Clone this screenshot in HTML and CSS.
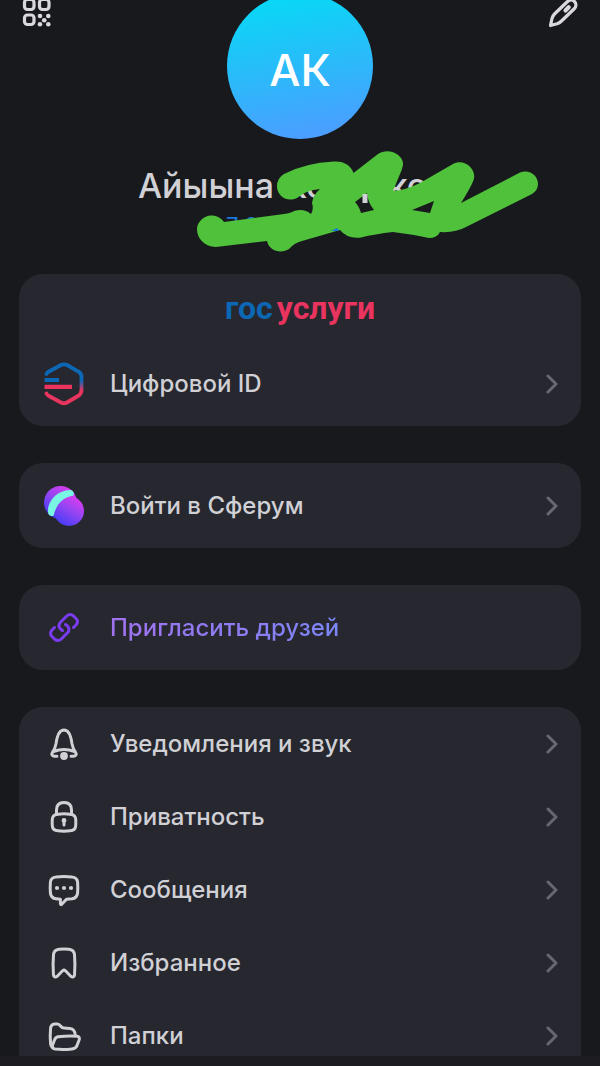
FILE: index.html
```html
<!DOCTYPE html>
<html lang="ru">
<head>
<meta charset="utf-8">
<meta name="viewport" content="width=device-width, initial-scale=1">
<title>Профиль</title>
<link rel="stylesheet" href="styles.css">
</head>
<body>
<svg class="defs" aria-hidden="true">
  <symbol id="chevron" viewBox="0 0 12 20"><path d="M2 2l8 8-8 8" fill="none" stroke="currentColor" stroke-width="3" stroke-linecap="round" stroke-linejoin="round"/></symbol>
</svg>
<main class="screen">
  <header class="top">
    <button class="tool" aria-label="QR-код">
      <svg width="30" height="30" viewBox="0 0 30 30" fill="none" stroke="currentColor" stroke-width="3.200">
        <rect x="3.500" y="1.500" width="9.500" height="10" rx="3"/><rect x="18.500" y="1.500" width="9.500" height="10" rx="3"/><rect x="3.500" y="17" width="9.500" height="9.500" rx="3"/>
        <g fill="currentColor" stroke="none"><circle cx="19" cy="18" r="2.300"/><circle cx="27.300" cy="18" r="2.300"/><circle cx="23.200" cy="22.200" r="2.300"/><circle cx="19" cy="26.300" r="2.300"/><circle cx="27.300" cy="26.300" r="2.300"/></g>
      </svg>
    </button>
    <div class="avatar">АК</div>
    <button class="tool" aria-label="Редактировать">
      <svg width="30" height="30" viewBox="0 0 30 30" fill="none" stroke="currentColor" stroke-width="3.200" stroke-linecap="round" stroke-linejoin="round">
        <path d="M1.500 27.500l1.500-7C3.500 18.500 4 17.500 5.500 16L18 4c2.500-2.500 5.500-2.500 7.500-.5s2 5-.5 7.500L12.500 23C11 24.500 10 25.200 8 25.800z"/><path d="M16.500 12.500l3.200-3.200" stroke-width="4.200"/>
      </svg>
    </button>
  </header>

  <section class="identity">
    <h1 class="name"><span>Айыына</span> <span>Ко</span><span class="tail">ко</span></h1>
    <p class="phone">7 99</p>
    <svg class="scribble" width="342" height="102" viewBox="197 151 342 102" aria-hidden="true">
      <path fill="#50c13a" fill-rule="evenodd" d="M211 215.500C217 215.500 221 218 224 222L284 214Q291 213 294 211Q304 208 311 214Q314 209 312 203Q313 195 320 189Q306 190 297 198C286 203 277 195 277 186.500Q277 178 284 174Q305 163 334 161.500C345 161 351 166 353.500 173L378 154C389 147 404 155 403 165Q402 170 400 174L393 191Q406 190 420 183L453 164C464 158 476 169 474 178Q474 182 461 203L520 172.500C530 169 538 176 538 184Q538 190 532 194L466 227Q455 233 440 232Q437 238 429 238Q410 234 393 232Q375 234 361 237.500Q347 239 340 230L302 241Q294 243 289 249C281 254 269 251 267 241L220 246.500C207 249 197 240 197 229C197 222 204 215.500 211 215.500ZM355 202Q359 206 361 213L374 210Q368 203 367 193ZM412 210L434 201L430 213Z"/>
      <path d="M365 194v9" stroke="#d0d0d5" stroke-width="5"/><path d="M331 231l6-3 2 3z" fill="#1877dc"/>
    </svg>
  </section>

  <section class="card">
    <div class="brand"><span class="brand-blue">гос</span><span class="brand-red">услуги</span></div>
    <a class="row" href="#id">
      <svg class="icon" width="44" height="44" viewBox="0 0 44 44" fill="none" stroke-width="3.800" stroke-linecap="round">
        <defs><linearGradient id="hex" x1="0" y1="0" x2="0" y2="44" gradientUnits="userSpaceOnUse"><stop offset=".42" stop-color="#0c67b5"/><stop offset=".65" stop-color="#e8345e"/></linearGradient></defs>
        <path stroke="url(#hex)" d="M4.500 12Q5 10.500 7 9.500L19 3Q22 1.600 25 3L36 9.300Q39.500 11 39.500 15V28Q39.500 32 36 34L25 40.500Q22 42 19 40.500L7 34Q5 33 4.500 31.500"/>
        <path d="M2.500 18H17" stroke="#0c67b5" stroke-linecap="butt"/><path d="M2.500 24.800H30" stroke="#e8345e" stroke-width="4.200" stroke-linecap="butt"/>
      </svg>
      <span class="label">Цифровой ID</span><svg class="chevron"><use href="#chevron"/></svg>
    </a>
  </section>

  <section class="card single">
    <a class="row" href="#sferum">
      <svg class="icon" width="44" height="44" viewBox="0 0 44 44">
        <defs><linearGradient id="sf" x1=".85" y1=".05" x2=".3" y2=".95"><stop stop-color="#e03cf0"/><stop offset=".5" stop-color="#9345f3"/><stop offset="1" stop-color="#4a3df5"/></linearGradient></defs>
        <circle cx="18.500" cy="18.500" r="16.500" fill="url(#sf)"/>
        <circle cx="27" cy="27" r="15" fill="url(#sf)"/>
        <path d="M6 28C5.500 17 15 6.500 28 6C31 6 32.500 8.500 31.500 11.500C21 13 14 20.500 11.700 31.500C9 33 6.200 31.500 6 28Z" fill="#79f5e4"/>
      </svg>
      <span class="label">Войти в Сферум</span><svg class="chevron"><use href="#chevron"/></svg>
    </a>
  </section>

  <section class="card single">
    <a class="row" href="#invite">
      <svg class="icon" width="44" height="44" viewBox="0 0 44 44" fill="none" stroke="#7a3cf0" stroke-width="3" stroke-linecap="round" stroke-linejoin="round">
        <path d="M31.500 21.500L34 19Q37 15.500 34 12.500L31.500 10Q28 7 24.700 10L18.500 16.200Q15.500 19.500 18.500 23L20.500 24.500"/>
        <path d="M31.500 21.500L34 19Q37 15.500 34 12.500L31.500 10Q28 7 24.700 10L18.500 16.200Q15.500 19.500 18.500 23L20.500 24.500" transform="rotate(180 22 21.500)"/>
      </svg>
      <span class="label invite">Пригласить друзей</span>
    </a>
  </section>

  <nav class="card menu">
    <a class="row" href="#notifications">
      <svg class="icon line" width="44" height="44" viewBox="0 0 44 44"><path d="M15 34.300h-2.500q-4-1-2-4 2.500-3 3.500-8.500c1-7.500 3-13.800 8-13.800s7 6.300 8 13.800q1 5.500 3.500 8.500 2 3-2 4H29M11.500 29.500Q22 25.500 32.500 29.500"/><circle cx="22" cy="34" r="3.900" fill="currentColor" stroke="none"/></svg>
      <span class="label">Уведомления и звук</span><svg class="chevron"><use href="#chevron"/></svg>
    </a>
    <a class="row" href="#privacy">
      <svg class="icon line" width="44" height="44" viewBox="0 0 44 44"><path d="M14.500 19.500V15q0-7.500 7.500-7.500t7.500 7.500v4.500"/><path d="M16 19.200Q22 18.500 28 19.200C32.500 19.500 33.500 21.500 33.700 24Q34 28 33.600 31.500C33.200 35 31 35.500 28 35.800Q22 36.500 16 35.800C13 35.500 10.800 35 10.400 31.500Q10 28 10.300 24C10.500 21.500 11.500 19.500 16 19.200Z"/><circle cx="22" cy="25.500" r="2.400" fill="currentColor" stroke="none"/><path d="M22 26.500v3.500"/></svg>
      <span class="label">Приватность</span><svg class="chevron"><use href="#chevron"/></svg>
    </a>
    <a class="row" href="#messages">
      <svg class="icon line" width="44" height="44" viewBox="0 0 44 44"><path d="M14 9Q22 8 30 9C34 9.400 35.200 11 35.600 14Q36 20 35.600 25C35.200 28.500 34 30.300 30 30.800L24.500 31.200 19.500 36.500Q18.500 37 18.400 35.500V31.300L14 30.800C10 30.300 8.800 28.500 8.400 25Q8 20 8.400 14C8.800 11 10 9.400 14 9Z"/><g fill="currentColor" stroke="none"><circle cx="15" cy="20" r="2.100"/><circle cx="22" cy="20" r="2.100"/><circle cx="29" cy="20" r="2.100"/></g></svg>
      <span class="label">Сообщения</span><svg class="chevron"><use href="#chevron"/></svg>
    </a>
    <a class="row" href="#favorites">
      <svg class="icon line" width="44" height="44" viewBox="0 0 44 44"><path d="M17 8.200Q22 7.600 27 8.200Q32 8.800 32.500 13.500Q33.300 23 32.600 33C32.500 36.500 30 37 28 34.500L23.500 29.800Q22 28.500 20.500 29.800L16 34.500C14 37 11.500 36.500 11.400 33Q10.700 23 11.500 13.500Q12 8.800 17 8.200Z"/></svg>
      <span class="label">Избранное</span><svg class="chevron"><use href="#chevron"/></svg>
    </a>
    <a class="row" href="#folders">
      <svg class="icon line" width="44" height="44" viewBox="0 0 44 44"><path d="M11 34Q9 33 8.600 30Q7.800 22 8.600 14Q9 10.500 12.500 10H15.500Q17 10 18.500 12Q20 14 22 14L28 14.500Q33 15 33.300 21.500"/><path d="M16 22.800Q26 21.500 35 22.200Q38 22.700 37.300 25.500L35 31.500Q34 34.500 30 34.900Q21 36 13 35Q9.500 34.400 10.600 31L12.500 26Q13.300 23.300 16 22.800Z"/></svg>
      <span class="label">Папки</span><svg class="chevron"><use href="#chevron"/></svg>
    </a>
  </nav>
</main>
<footer class="bottom-bar"></footer>
</body>
</html>
```

FILE: styles.css
```css
* { box-sizing: border-box; }

body {
  margin: 0;
  height: 100vh;
  display: flex;
  flex-direction: column;
  background: #18191d;
  color: #d0d0d5;
  font-family: Inter, "Noto Sans", sans-serif;
}

.defs { position: absolute; width: 0; height: 0; }

.screen {
  flex: 1;
  min-height: 0;
  overflow: hidden;
  padding: 0 19px;
}

.top {
  display: flex;
  justify-content: space-between;
  align-items: flex-start;
  margin: 0 2px;
}

.tool {
  padding: 0;
  border: 0;
  background: none;
  color: #d9d9dd;
  margin-top: -2px;
}

.tool svg { display: block; }

.avatar {
  width: 146px;
  height: 146px;
  margin-top: -7px;
  border-radius: 50%;
  background: linear-gradient(170deg, #06daf5 5%, #4d9cff 95%);
  color: #fff;
  font-size: 44px;
  font-weight: 500;
  display: flex;
  align-items: center;
  justify-content: center;
  padding-top: 8px;
}

.identity {
  position: relative;
  height: 135px;
  padding: 26px 0 0 119px;
}

.name {
  margin: 0;
  display: flex;
  gap: 10px;
  font-size: 34px;
  line-height: 42px;
  font-weight: 500;
}

.tail { margin-left: 52px; }

.phone {
  margin: 4px 0 0 88px;
  font-size: 22px;
  line-height: 28px;
  color: #1877dc;
}

/* Marker strokes lie over the name and the phone number. */
.scribble { position: absolute; left: 178px; top: 12px; }

.card {
  margin-bottom: 37px;
  border-radius: 24px;
  background: #26272f;
  overflow: hidden;
  padding-bottom: 6px;
}

.single { padding-top: 6px; }

.brand {
  height: 73px;
  display: flex;
  align-items: center;
  justify-content: center;
  gap: 4px;
  font-family: Roboto, "Noto Sans", sans-serif;
  font-size: 32px;
  font-weight: 700;
  padding-bottom: 6px;
}

.brand-blue { color: #0c67b5; }
.brand-red { color: #e8345e; }

.row {
  height: 73px;
  display: flex;
  align-items: center;
  padding: 0 23px;
  color: inherit;
  text-decoration: none;
}

.icon { flex: none; }

.line {
  fill: none;
  stroke: currentColor;
  stroke-width: 3px;
  stroke-linecap: round;
  stroke-linejoin: round;
}

.label {
  margin-left: 24px;
  font-size: 24px;
  line-height: 32px;
  font-weight: 500;
}

.invite {
  background: linear-gradient(90deg, #a072ee, #7c86f6);
  background-clip: text;
  color: transparent;
}

.chevron {
  width: 12px;
  height: 20px;
  margin-left: auto;
  color: #67686f;
}

.bottom-bar { height: 10px; background: #1d1c21; }
```
